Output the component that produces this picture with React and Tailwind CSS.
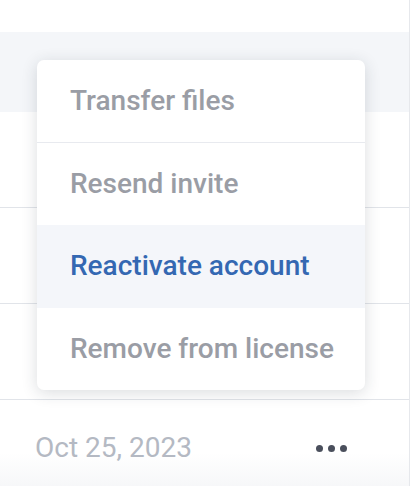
import React from 'react';

const menuItems = [
  { label: 'Transfer files', active: false, divider: true },
  { label: 'Resend invite', active: false },
  { label: 'Reactivate account', active: true },
  { label: 'Remove from license', active: false },
];

const RowMenu = () => (
  <div className="absolute left-[37px] top-[60px] w-[328px] bg-white rounded-[7px] shadow-[0_3px_16px_rgba(30,41,59,0.16)] overflow-hidden">
    {menuItems.map((item) => (
      <div
        key={item.label}
        className={`h-[82.5px] flex items-center pl-[33px] text-[28px] font-medium ${
          item.active ? 'bg-[#f4f6fa] text-[#3468b2]' : 'text-[#9a9da5]'
        } ${item.divider ? 'border-b border-[#e8eaef]' : ''}`}
      >
        {item.label}
      </div>
    ))}
  </div>
);

const App = () => {
  return (
    <div className="relative w-[414px] h-[486px] overflow-hidden bg-white font-['Roboto',sans-serif]">
      <div className="w-[410px] h-full border-r border-[#e6e8ec]">
        <div className="h-[32px]" />
        <div className="h-[80px] bg-[#f4f6f9]" />
        <div className="h-[96px] border-b border-[#e1e4e9]" />
        <div className="h-[96px] border-b border-[#e1e4e9]" />
        <div className="h-[96px] border-b border-[#e1e4e9]" />
        <div className="h-[96px] flex items-center justify-between pl-[35px] pr-[62px] bg-gradient-to-b from-white from-55% to-[#f4f5f7]">
          <span className="text-[28px] text-[#b4b9c3]">Oct 25, 2023</span>
          <div className="flex items-center gap-[5px]">
            <span className="w-[7px] h-[7px] rounded-full bg-[#4a4f5c]" />
            <span className="w-[7px] h-[7px] rounded-full bg-[#4a4f5c]" />
            <span className="w-[7px] h-[7px] rounded-full bg-[#4a4f5c]" />
          </div>
        </div>
      </div>
      <RowMenu />
    </div>
  );
};

export default App;
